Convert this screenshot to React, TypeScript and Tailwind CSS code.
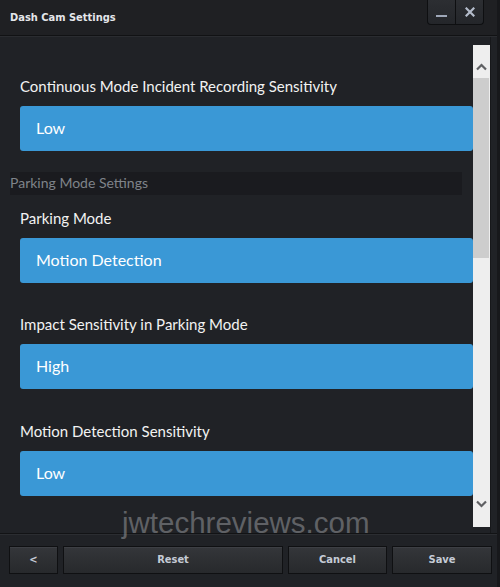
import React from "react";

const TITLE_FONT = "'DejaVu Sans Condensed', 'DejaVu Sans', 'Liberation Sans', sans-serif";

const Field = ({ label, value }: { label: string; value: string }) => (
  <div className="ml-[20px]">
    <div className="h-[20px] leading-[18px] text-[15px] text-[#f2f2f2]">{label}</div>
    <div className="mt-[9px] h-[45px] rounded-[3px] bg-[#3a98d6] pl-[16px] pb-[2px] flex items-center text-[16px] text-white">
      {value}
    </div>
  </div>
);

const FooterBtn = ({ children, className }: { children: React.ReactNode; className: string }) => (
  <div
    className={`h-[28px] flex items-center justify-center border border-[#0f1012] bg-gradient-to-b from-[#34363a] to-[#27292c] text-[#c5cbd6] text-[11px] font-bold shadow-[inset_0_1px_0_#3d3f44] ${className}`}
    style={{ fontFamily: TITLE_FONT }}
  >
    {children}
  </div>
);

export default function App() {
  return (
    <div
      className="relative w-[500px] h-[587px] bg-[#202226] border-r-[3px] border-[#17181b] overflow-hidden flex flex-col"
      style={{ fontFamily: "Lato, 'Noto Sans', sans-serif" }}
    >
      {/* Title bar */}
      <div className="h-[36px] shrink-0 bg-[#1f2023] flex items-start relative border-b border-[#111214]">
        <div className="pl-[10px] pt-[10px] text-[11px] font-bold text-[#e4e6ea]" style={{ fontFamily: TITLE_FONT }}>
          Dash Cam Settings
        </div>
        <div className="absolute left-[427px] top-0 flex h-[25px] rounded-b-[4px] border border-t-0 border-[#0e0f11] bg-gradient-to-b from-[#2c2e32] to-[#24262a] overflow-hidden">
          <div className="w-[28px] flex items-center justify-center border-r border-[#0e0f11]">
            <div className="w-[11px] h-[2px] bg-[#9ea7b8] mt-[7px]" />
          </div>
          <div className="w-[27px] flex items-center justify-center">
            <svg width="10" height="10" viewBox="0 0 10 10">
              <path d="M1.5 1.5 L8.5 8.5 M8.5 1.5 L1.5 8.5" stroke="#b4bccb" strokeWidth="2.2" strokeLinecap="square" />
            </svg>
          </div>
        </div>
      </div>

      {/* Content */}
      <div className="flex-1 flex border-t border-[#2a2c30] min-h-0">
        <div className="w-[473px] shrink-0 pt-[40px] overflow-hidden">
          <Field label="Continuous Mode Incident Recording Sensitivity" value="Low" />
          <div className="mt-[21px] ml-[10px] mr-[11px] h-[23px] bg-[#1a1b1f] text-[14px] text-[#7f8389] leading-[21px]">
            Parking Mode Settings
          </div>
          <div className="mt-[14px]">
            <Field label="Parking Mode" value="Motion Detection" />
          </div>
          <div className="mt-[32px]">
            <Field label="Impact Sensitivity in Parking Mode" value="High" />
          </div>
          <div className="mt-[33px]">
            <Field label="Motion Detection Sensitivity" value="Low" />
          </div>
        </div>
        {/* Scrollbar */}
        <div className="w-[17px] mt-[8px] h-[482px] bg-[#eeeeee] relative">
          <svg className="absolute left-[3px] top-[18px]" width="11" height="8" viewBox="0 0 11 8">
            <path d="M1 6.5 L5.5 2 L10 6.5" stroke="#5f6063" strokeWidth="2.2" fill="none" />
          </svg>
          <div className="absolute left-0 right-[1px] top-[33px] h-[180px] bg-[#cdcdcd]" />
          <svg className="absolute left-[3px] top-[455px]" width="11" height="8" viewBox="0 0 11 8">
            <path d="M1 1.5 L5.5 6 L10 1.5" stroke="#5f6063" strokeWidth="2.2" fill="none" />
          </svg>
        </div>
        <div className="flex-1 border-l border-[#17181b]" />
      </div>

      {/* Footer */}
      <div className="h-[54px] shrink-0 border-t border-[#121315] bg-[#202226] flex gap-[5px] pl-[9px] pt-[12px] shadow-[inset_0_1px_0_#2b2d31]">
        <FooterBtn className="w-[49px]">&lt;</FooterBtn>
        <FooterBtn className="w-[220px]">Reset</FooterBtn>
        <FooterBtn className="w-[99px]">Cancel</FooterBtn>
        <FooterBtn className="w-[100px]">Save</FooterBtn>
      </div>

      {/* Watermark */}
      <div
        className="absolute left-[122px] top-[505px] text-[29.5px] leading-[36px] text-[#8a8c90] opacity-60 pointer-events-none"
        style={{ fontFamily: "'Liberation Sans', Arial, sans-serif" }}
      >
        jwtechreviews.com
      </div>
    </div>
  );
}
